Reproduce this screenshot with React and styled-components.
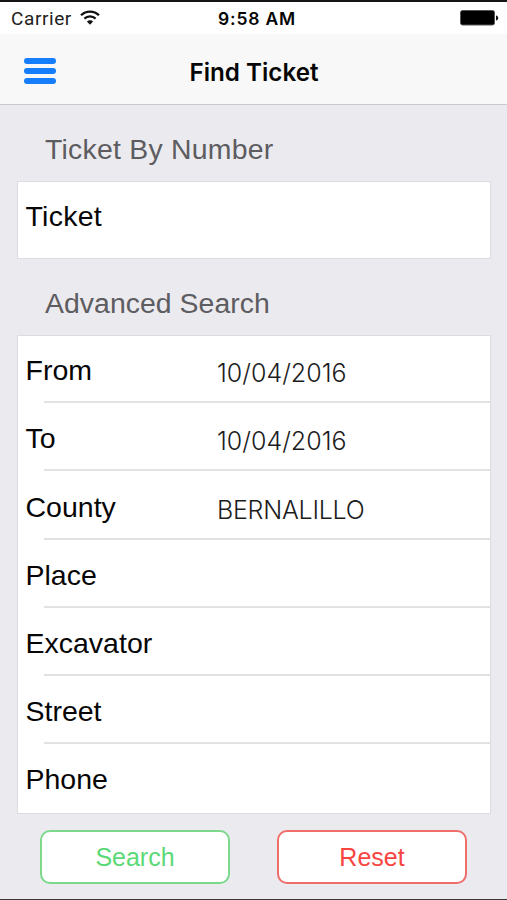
import React from "react";
import styled, { createGlobalStyle } from "styled-components";

const GlobalStyle = createGlobalStyle`
  * {
    box-sizing: border-box;
  }

  body {
    margin: 0;
    background: #ebeaef;
  }
`;

const Screen = styled.div`
  width: 507px;
  height: 900px;
  display: flex;
  flex-direction: column;
  overflow: hidden;
  background: #ebeaef;
  border-top: 2px solid #151315;
  border-bottom: 1px solid #3a363c;
  font-family: "Liberation Sans", Arial, sans-serif;
  color: #060606;
`;

const StatusBar = styled.div`
  height: 32px;
  flex-shrink: 0;
  display: grid;
  grid-template-columns: 1fr auto 1fr;
  align-items: center;
  padding: 0 8px 0 11px;
  background: #fff;
  font-family: Inter, sans-serif;
  font-size: 18px;
`;

const Carrier = styled.div`
  display: flex;
  align-items: center;
  gap: 8px;
  color: #222;
  font-family: Roboto, sans-serif;
  font-size: 19px;
  letter-spacing: 0.6px;
`;

const Clock = styled.div`
  padding-left: 4px;
  font-weight: 600;
  font-size: 17.5px;
  letter-spacing: 0.8px;
`;

const BatterySlot = styled.div`
  display: flex;
  justify-content: flex-end;
`;

const NavBar = styled.header`
  height: 71px;
  flex-shrink: 0;
  display: grid;
  grid-template-columns: 1fr auto 1fr;
  align-items: center;
  padding: 4px 24px 0;
  background: #f8f8f8;
  border-bottom: 1px solid #c9c9cd;
`;

const MenuButton = styled.button`
  width: 32px;
  height: 26px;
  display: flex;
  flex-direction: column;
  justify-content: space-between;
  padding: 0;
  border: 0;
  background: none;
`;

const MenuBar = styled.span`
  width: 32px;
  height: 6px;
  border-radius: 3px;
  background: #167efb;
`;

const Title = styled.h1`
  margin: 0;
  padding: 3px 0 0 1px;
  font-family: Inter, sans-serif;
  font-size: 24.2px;
  font-weight: 600;
  line-height: 30px;
`;

const SectionTitle = styled.h2`
  height: 76px;
  flex-shrink: 0;
  display: flex;
  align-items: flex-end;
  margin: 0;
  padding: 0 0 16px 45px;
  font-size: 28.4px;
  font-weight: 400;
  line-height: 32px;
  letter-spacing: ${(p) => p.$spacing}px;
  color: #5d5c60;
`;

const Card = styled.section`
  flex-shrink: 0;
  margin: 0 16px 0 17px;
  background: #fff;
  border: 1px solid #dcdbe0;
`;

const Row = styled.div`
  height: ${(p) => p.$height || 68}px;
  display: grid;
  grid-template-columns: 191.5px 1fr;
  align-items: start;
  padding: 18.5px 0 0 7.5px;
  background: ${(p) =>
    p.$divided
      ? "linear-gradient(#e2e2e4, #e2e2e4) right bottom / calc(100% - 26px) 2px no-repeat"
      : "none"};

  &:first-child {
    padding-top: 17.5px;
  }

  &:nth-child(3) {
    padding-top: 19.5px;
  }
`;

const Label = styled.label`
  font-size: 28.5px;
  line-height: 32px;
  letter-spacing: ${(p) => p.$spacing || 0}px;
`;

const Value = styled.span`
  padding-top: 3px;
  font-family: Inter, sans-serif;
  font-size: 25px;
  font-weight: 300;
  line-height: 32px;
  letter-spacing: ${(p) => p.$spacing || 0}px;
  color: #1c1c1c;
`;

const Actions = styled.div`
  display: flex;
  gap: 47px;
  padding: 16px 40px 0;
`;

const ActionButton = styled.button`
  width: 190px;
  height: 54px;
  padding: 0;
  border: 2px solid ${(p) => p.$border};
  border-radius: 10px;
  background: #fff;
  color: ${(p) => p.$color};
  font-family: inherit;
  font-size: 25px;
`;

const fields = [
  { label: "From", value: "10/04/2016", height: 67 },
  { label: "To", value: "10/04/2016" },
  { label: "County", value: "BERNALILLO", spacing: -0.25, height: 69 },
  { label: "Place" },
  { label: "Excavator" },
  { label: "Street" },
  { label: "Phone", height: 69 },
];

function WifiIcon() {
  return (
    <svg width="20" height="16" viewBox="0 0 20 16" fill="none" stroke="#111" strokeWidth="2.3">
      <path d="M1 5.2C6 .3 14 .3 19 5.2" />
      <path d="M4.4 8.6C7.5 5.6 12.5 5.6 15.6 8.6" />
      <path d="M10 14.7L6.9 11.5C8.6 9.8 11.4 9.8 13.1 11.5Z" fill="#111" stroke="none" />
    </svg>
  );
}

function BatteryIcon() {
  return (
    <svg width="39" height="16" viewBox="0 0 39 16">
      <rect x="0.5" y="0.5" width="34" height="14.5" rx="2" fill="#000" stroke="#555" />
      <path d="M36 5.5C39 6 39 10 36 10.5Z" fill="#111" />
    </svg>
  );
}

export default function App() {
  return (
    <Screen>
      <GlobalStyle />
      <StatusBar>
        <Carrier>
          Carrier
          <WifiIcon />
        </Carrier>
        <Clock>9:58 AM</Clock>
        <BatterySlot>
          <BatteryIcon />
        </BatterySlot>
      </StatusBar>
      <NavBar>
        <MenuButton aria-label="Menu">
          <MenuBar />
          <MenuBar />
          <MenuBar />
        </MenuButton>
        <Title>Find Ticket</Title>
      </NavBar>

      <SectionTitle $spacing={0.25}>Ticket By Number</SectionTitle>
      <Card>
        <Row $height={76}>
          <Label $spacing={0.25}>Ticket</Label>
        </Row>
      </Card>

      <SectionTitle $spacing={0.05}>Advanced Search</SectionTitle>
      <Card>
        {fields.map((field, i) => (
          <Row key={field.label} $height={field.height} $divided={i < fields.length - 1}>
            <Label>{field.label}</Label>
            <Value $spacing={field.spacing}>{field.value}</Value>
          </Row>
        ))}
      </Card>

      <Actions>
        <ActionButton $color="#5bd977" $border="#7cd98c">Search</ActionButton>
        <ActionButton $color="#f8453f" $border="#ef6e6a">Reset</ActionButton>
      </Actions>
    </Screen>
  );
}
